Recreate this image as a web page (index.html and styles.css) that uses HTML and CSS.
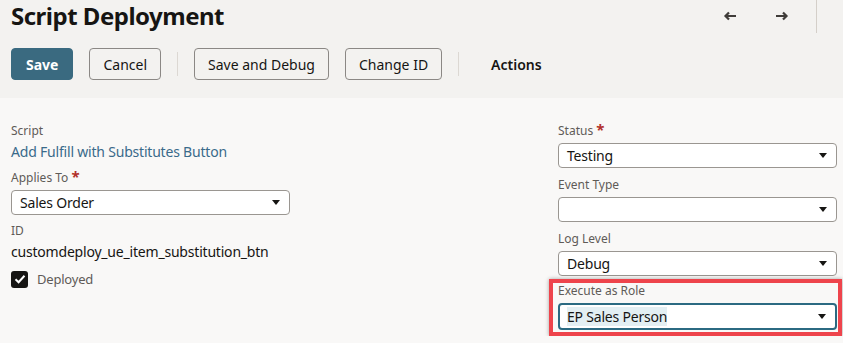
FILE: index.html
```html
<!DOCTYPE html>
<html lang="en">
<head>
    <meta charset="UTF-8">
    <meta name="viewport" content="width=device-width, initial-scale=1.0">
    <title>Script Deployment</title>
    <link rel="stylesheet" href="styles.css">
</head>
<body>
    <header class="page-header">
        <div class="title-row">
            <h1 class="page-title">Script Deployment</h1>
            <div class="nav-arrows">
                <button class="nav-btn" aria-label="Previous">
                    <svg width="14" height="10" viewBox="0 0 14 10"><path d="M13 5H3M6 1.5L2.5 5L6 8.5" fill="none" stroke="#3f3c39" stroke-width="2.2"/></svg>
                </button>
                <button class="nav-btn" aria-label="Next">
                    <svg width="14" height="10" viewBox="0 0 14 10"><path d="M1 5H11M8 1.5L11.5 5L8 8.5" fill="none" stroke="#3f3c39" stroke-width="2.2"/></svg>
                </button>
                <span class="nav-sep"></span>
            </div>
        </div>
        <div class="toolbar">
            <button class="btn btn-primary">Save</button>
            <button class="btn">Cancel</button>
            <span class="tool-sep"></span>
            <button class="btn">Save and Debug</button>
            <button class="btn">Change ID</button>
            <span class="tool-sep"></span>
            <button class="btn btn-ghost">Actions</button>
        </div>
    </header>

    <main class="form-body">
        <div class="form-col">
            <div class="field">
                <div class="field-label">Script</div>
                <a href="#" class="field-link">Add Fulfill with Substitutes Button</a>
            </div>
            <div class="field">
                <div class="field-label">Applies To <span class="req">*</span></div>
                <div class="select"><span>Sales Order</span><span class="caret"></span></div>
            </div>
            <div class="field">
                <div class="field-label">ID</div>
                <div class="field-value">customdeploy_ue_item_substitution_btn</div>
            </div>
            <label class="check">
                <span class="check-box">
                    <svg width="12" height="10" viewBox="0 0 12 10"><path d="M1.5 5.2L4.6 8.2L10.5 1.8" fill="none" stroke="#fff" stroke-width="2"/></svg>
                </span>
                Deployed
            </label>
        </div>

        <div class="form-col">
            <div class="field">
                <div class="field-label">Status <span class="req">*</span></div>
                <div class="select"><span>Testing</span><span class="caret"></span></div>
            </div>
            <div class="field">
                <div class="field-label">Event Type</div>
                <div class="select"><span></span><span class="caret"></span></div>
            </div>
            <div class="field">
                <div class="field-label">Log Level</div>
                <div class="select"><span>Debug</span><span class="caret"></span></div>
            </div>
            <div class="field highlight">
                <div class="field-label">Execute as Role</div>
                <div class="select focused"><span class="selected-text">EP Sales Person</span><span class="caret"></span></div>
            </div>
        </div>
    </main>
</body>
</html>
```

FILE: styles.css
```css
body {
    font-family: "Noto Sans", Arial, sans-serif;
    margin: 0;
    padding: 0;
    background-color: #f9f8f7;
    color: #161513;
    letter-spacing: -0.2px;
}
.page-header {
    background-color: #f3f2f0;
    height: 98px;
    box-sizing: border-box;
    padding: 0 0 0 11px;
}
.title-row {
    display: flex;
    align-items: flex-start;
    height: 34px;
}
.page-title {
    margin: 0;
    font-size: 24px;
    line-height: 32px;
    font-weight: 700;
    letter-spacing: -0.5px;
}
.nav-arrows {
    margin-left: auto;
    display: flex;
    align-items: flex-start;
    gap: 20px;
    padding-right: 26px;
}
.nav-btn {
    width: 32px;
    height: 32px;
    padding: 0;
    border: none;
    background: none;
    display: flex;
    align-items: center;
    justify-content: center;
    cursor: pointer;
}
.nav-sep {
    width: 1px;
    height: 33px;
    background-color: #d4cfc9;
    margin-left: -2px;
}
.toolbar {
    display: flex;
    align-items: center;
    gap: 16px;
    margin-top: 14px;
}
.btn {
    height: 32px;
    padding: 0 13px;
    font-family: inherit;
    font-size: 14px;
    color: #161513;
    background: transparent;
    border: 1px solid #8b8885;
    border-radius: 4px;
    cursor: pointer;
}
.btn-primary {
    background-color: #3a6a80;
    border-color: #3a6a80;
    color: white;
    font-weight: 700;
    padding: 0 14px;
}
.btn-ghost {
    border-color: transparent;
    font-weight: 600;
    padding: 0 15px;
}
.tool-sep {
    width: 1px;
    height: 24px;
    background-color: #dcd8d3;
}
.form-body {
    display: flex;
    justify-content: space-between;
    padding: 25px 6px 0 11px;
}
.form-col {
    width: 279px;
    display: flex;
    flex-direction: column;
    gap: 9px;
}
.form-col:first-child {
    gap: 8px;
}
.field {
    display: flex;
    flex-direction: column;
}
.field-label {
    font-size: 12px;
    line-height: 16px;
    color: #5f5b57;
    margin-bottom: 4px;
    letter-spacing: 0;
}
.req {
    color: #b2312b;
    font-size: 15px;
    line-height: 12px;
    font-weight: 700;
}
.field-link {
    font-size: 14px;
    line-height: 20px;
    color: #3a6a8a;
    text-decoration: none;
    margin-top: -1px;
}
.field-value {
    font-size: 14px;
    line-height: 20px;
    margin-top: -1px;
}
.select {
    height: 25px;
    box-sizing: border-box;
    display: flex;
    align-items: center;
    justify-content: space-between;
    padding: 0 9px 0 8px;
    background: white;
    border: 1px solid #9a9691;
    border-radius: 4px;
    font-size: 14px;
}
.caret {
    width: 0;
    height: 0;
    border-left: 4px solid transparent;
    border-right: 4px solid transparent;
    border-top: 5px solid #161513;
}
.check {
    display: flex;
    align-items: center;
    gap: 9px;
    font-size: 13px;
    color: #5f5b57;
}
.check-box {
    width: 17px;
    height: 17px;
    border-radius: 3px;
    background-color: #161513;
    display: flex;
    align-items: center;
    justify-content: center;
}
.highlight {
    border: 4px solid #ee444c;
    box-shadow: 0 0 4px rgba(0, 0, 0, 0.35);
    margin: -6px -5px 0 -9px;
    padding: 0 1px 2px 5px;
}
.select.focused {
    height: 27px;
    border: 2px solid #2b6a82;
    padding-left: 7px;
}
.selected-text {
    background-color: #e3eff3;
}
```
